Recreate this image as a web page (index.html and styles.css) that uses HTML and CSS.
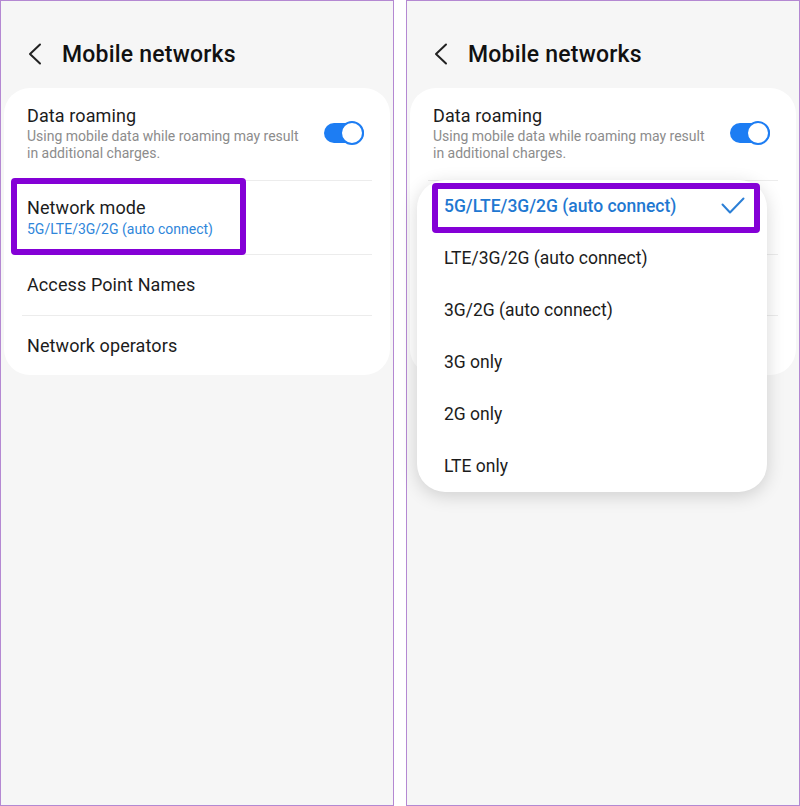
FILE: index.html
```html
<!DOCTYPE html>
<html lang="en">
<head>
<meta charset="utf-8">
<title>Mobile networks</title>
<link rel="stylesheet" href="styles.css">
</head>
<body>
  <section class="panel">
    <header class="header">
      <svg class="back" width="14" height="22" viewBox="0 0 14 22"><path d="M12 1.5 L2 11 L12 20.5" fill="none" stroke="#222" stroke-width="2" stroke-linecap="round" stroke-linejoin="round"/></svg>
      <h1 class="title">Mobile networks</h1>
    </header>
    <div class="card">
      <div class="row row-roaming">
        <div class="texts">
          <div class="label">Data roaming</div>
          <div class="desc">Using mobile data while roaming may result in additional charges.</div>
        </div>
        <div class="toggle"><span class="knob"></span></div>
      </div>
      <div class="divider"></div>
      <div class="row row-mode">
        <div class="texts">
          <div class="label">Network mode</div>
          <div class="value">5G/LTE/3G/2G (auto connect)</div>
        </div>
        <div class="highlight highlight-mode"></div>
      </div>
      <div class="divider"></div>
      <div class="row row-simple"><div class="label">Access Point Names</div></div>
      <div class="divider"></div>
      <div class="row row-simple row-last"><div class="label">Network operators</div></div>
    </div>
  </section>

  <section class="panel">
    <header class="header">
      <svg class="back" width="14" height="22" viewBox="0 0 14 22"><path d="M12 1.5 L2 11 L12 20.5" fill="none" stroke="#222" stroke-width="2" stroke-linecap="round" stroke-linejoin="round"/></svg>
      <h1 class="title">Mobile networks</h1>
    </header>
    <div class="card">
      <div class="row row-roaming">
        <div class="texts">
          <div class="label">Data roaming</div>
          <div class="desc">Using mobile data while roaming may result in additional charges.</div>
        </div>
        <div class="toggle"><span class="knob"></span></div>
      </div>
      <div class="divider"></div>
      <div class="row row-mode covered">
        <div class="texts">
          <div class="label">Network mode</div>
          <div class="value">5G/LTE/3G/2G (auto connect)</div>
        </div>
      </div>
      <div class="divider"></div>
      <div class="row row-simple covered"><div class="label">Access Point Names</div></div>
      <div class="divider"></div>
      <div class="row row-simple row-last covered"><div class="label">Network operators</div></div>
    </div>

    <ul class="popup">
      <li class="option selected">
        <span>5G/LTE/3G/2G (auto connect)</span>
        <svg class="check" width="24" height="18" viewBox="0 0 24 18"><path d="M1.5 7.5 L9 15.5 L22.5 1.5" fill="none" stroke="#2b7fd6" stroke-width="2" stroke-linecap="round" stroke-linejoin="round"/></svg>
        <div class="highlight highlight-option"></div>
      </li>
      <li class="option">LTE/3G/2G (auto connect)</li>
      <li class="option">3G/2G (auto connect)</li>
      <li class="option">3G only</li>
      <li class="option">2G only</li>
      <li class="option">LTE only</li>
    </ul>
  </section>
</body>
</html>
```

FILE: styles.css
```css
* { box-sizing: border-box; }

html, body {
  margin: 0;
  padding: 0;
  background: #ffffff;
}

body {
  width: 800px;
  height: 806px;
  overflow: hidden;
  display: flex;
  gap: 12px;
  font-family: Roboto, "Noto Sans", "Liberation Sans", sans-serif;
  color: #1c1c1c;
}

.panel {
  position: relative;
  width: 394px;
  height: 806px;
  background: #f6f6f6;
  border: 1px solid #b488d2;
}

.header {
  display: flex;
  align-items: center;
  height: 87px;
  padding: 21px 0 0 27px;
}

.back {
  display: block;
  flex: none;
  margin-top: -2px;
}

.title {
  margin: 0 0 0 20px;
  font-size: 23px;
  line-height: 26px;
  font-weight: 500;
  color: #111;
  letter-spacing: 0.2px;
}

.card {
  margin: 0 3px;
  background: #fff;
  border-radius: 26px;
}

.row {
  position: relative;
  display: flex;
  align-items: center;
  justify-content: space-between;
  padding: 0 26px 0 23px;
}

.row-roaming {
  padding-top: 16px;
  padding-bottom: 18px;
}

.row-mode {
  padding-top: 15px;
  padding-bottom: 16px;
}

.row-simple {
  padding-top: 18px;
  padding-bottom: 18px;
}

.row-last {
  padding-bottom: 17px;
}

.covered .label,
.covered .value {
  visibility: hidden;
}

.texts {
  max-width: 282px;
}

.label {
  font-size: 18px;
  line-height: 24px;
  color: #1c1c1c;
  letter-spacing: 0.1px;
}

.desc {
  font-size: 14px;
  line-height: 17px;
  color: #8c8c8c;
}

.value {
  font-size: 14px;
  line-height: 18px;
  color: #2f86da;
}

.divider {
  height: 1px;
  margin: 0 18px;
  background: #ececec;
}

.toggle {
  position: relative;
  flex: none;
  width: 40px;
  height: 20px;
  border-radius: 10px;
  background: #1d7df3;
}

.knob {
  position: absolute;
  right: 0;
  top: -2px;
  width: 24px;
  height: 24px;
  border-radius: 50%;
  background: #fff;
  border: 2px solid #1d7df3;
}

.highlight {
  position: absolute;
  border: 6px solid #8400d6;
  border-radius: 4px;
  pointer-events: none;
}

.highlight-mode {
  left: 7px;
  top: -3px;
  width: 235px;
  height: 77px;
}

.popup {
  position: absolute;
  left: 10px;
  top: 179px;
  width: 350px;
  margin: 0;
  padding: 0;
  list-style: none;
  background: #fff;
  border-radius: 28px;
  box-shadow: 0 4px 18px rgba(0, 0, 0, 0.16);
}

.option {
  position: relative;
  display: flex;
  align-items: center;
  justify-content: space-between;
  height: 52px;
  padding: 0 22px 0 27px;
  font-size: 17.5px;
  color: #1c1c1c;
}

.option.selected {
  color: #1f78d1;
  font-weight: 500;
}

.check {
  display: block;
  flex: none;
}

.highlight-option {
  left: 15px;
  top: 3px;
  width: 328px;
  height: 50px;
}
```
